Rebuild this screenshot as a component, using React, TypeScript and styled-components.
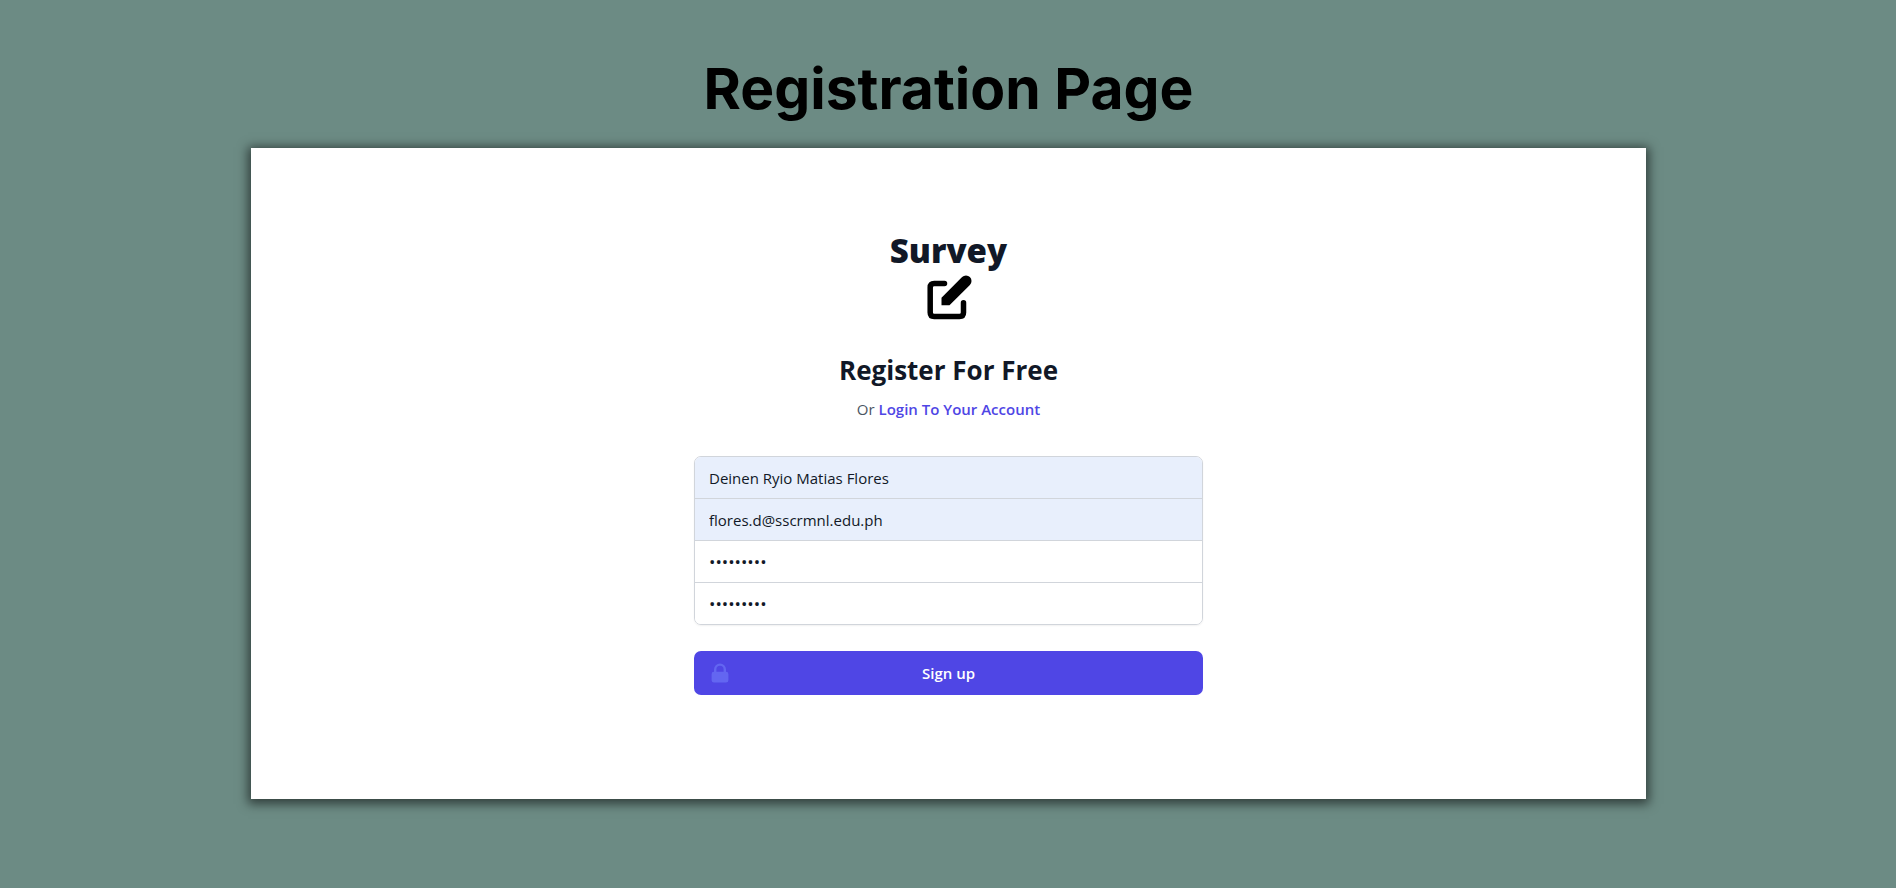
import React from "react";
import styled, { createGlobalStyle } from "styled-components";

const GlobalStyle = createGlobalStyle`
  *, *::before, *::after { box-sizing: border-box; }
  body {
    margin: 0;
    background: #6c8b84;
    font-family: "Segoe UI", "Open Sans", sans-serif;
    color: #111827;
  }
`;

const Page = styled.main`
  min-height: 100vh;
  padding: 51px 250px 88px 251px;
`;

const PageTitle = styled.h1`
  margin: 0 0 21px;
  font: 700 57px/76px Inter, sans-serif;
  text-align: center;
  color: #000;
`;

const Card = styled.section`
  display: flex;
  flex-direction: column;
  align-items: center;
  padding: 83px 24px 104px;
  background: #fff;
  box-shadow: 0 2px 10px 3px rgba(0, 0, 0, 0.55);
`;

const Brand = styled.h2`
  margin: 0 0 2px;
  font-size: 33px;
  font-weight: 800;
  line-height: 40px;
`;

const EditIcon = styled.svg`
  width: 48px;
  height: 48px;
`;

const Heading = styled.h3`
  margin: 29px 0 0;
  font-size: 26px;
  font-weight: 700;
  line-height: 40px;
`;

const Hint = styled.p`
  margin: 7px 0 0;
  font-size: 15px;
  line-height: 24px;
  color: #4b5563;
`;

const LoginLink = styled.a`
  font-weight: 600;
  color: #4f46e5;
  text-decoration: none;
`;

const Form = styled.form`
  display: flex;
  flex-direction: column;
  gap: 26px;
  width: 100%;
  max-width: 509px;
  margin-top: 35px;
`;

const Fields = styled.div`
  border: 1px solid #d1d5db;
  border-radius: 7px;
  overflow: hidden;
  box-shadow: 0 1px 2px rgba(0, 0, 0, 0.06);
`;

const Field = styled.input<{ $filled?: boolean }>`
  display: block;
  width: 100%;
  height: 41px;
  padding: 0 14px;
  border: 0;
  border-radius: 0;
  outline: none;
  background: ${(p) => (p.$filled ? "#e8effc" : "#fff")};
  font-family: inherit;
  font-size: 15px;
  color: #111827;

  & + & {
    height: 42px;
    border-top: 1px solid #d1d5db;
  }
  &[type="password"] { font-size: 17px; }
`;

const SubmitButton = styled.button`
  position: relative;
  height: 44px;
  border: 0;
  border-radius: 7px;
  background: #4f46e5;
  font-family: inherit;
  font-size: 15px;
  font-weight: 600;
  color: #fff;
`;

const LockIcon = styled.svg`
  position: absolute;
  top: 10px;
  left: 14px;
  width: 24px;
  height: 24px;
  fill: #6366f1;
`;

export default function App() {
  return (
    <>
      <GlobalStyle />
      <Page>
        <PageTitle>Registration Page</PageTitle>
        <Card>
          <Brand>Survey</Brand>
          <EditIcon viewBox="0 0 48 48" aria-hidden="true">
            <path
              d="M19.500 10.500H9.200Q5.200 10.500 5.200 14.500V39.500Q5.200 43.500 9.200 43.500H34.500Q38.500 43.500 38.500 39.500V29.700"
              fill="none"
              stroke="#000"
              strokeWidth="5.5"
              strokeLinecap="round"
            />
            <path d="M16.500 24.700L37.100 4.100A5.500 5.500 0 0 1 44.900 11.900L24.500 32.300H16.500Z" />
          </EditIcon>
          <Heading>Register For Free</Heading>
          <Hint>
            Or <LoginLink href="#login">Login To Your Account</LoginLink>
          </Hint>
          <Form onSubmit={(e) => e.preventDefault()}>
            <Fields>
              <Field $filled type="text" aria-label="Full name" defaultValue="Deinen Ryio Matias Flores" />
              <Field $filled type="email" aria-label="Email address" defaultValue="flores.d@sscrmnl.edu.ph" />
              <Field type="password" aria-label="Password" defaultValue="survey123" />
              <Field type="password" aria-label="Confirm password" defaultValue="survey123" />
            </Fields>
            <SubmitButton type="submit">
              <LockIcon viewBox="0 0 20 20" aria-hidden="true">
                <path
                  fillRule="evenodd"
                  clipRule="evenodd"
                  d="M5 9V7a5 5 0 0110 0v2a2 2 0 012 2v5a2 2 0 01-2 2H5a2 2 0 01-2-2v-5a2 2 0 012-2zm8-2v2H7V7a3 3 0 016 0z"
                />
              </LockIcon>
              Sign up
            </SubmitButton>
          </Form>
        </Card>
      </Page>
    </>
  );
}
